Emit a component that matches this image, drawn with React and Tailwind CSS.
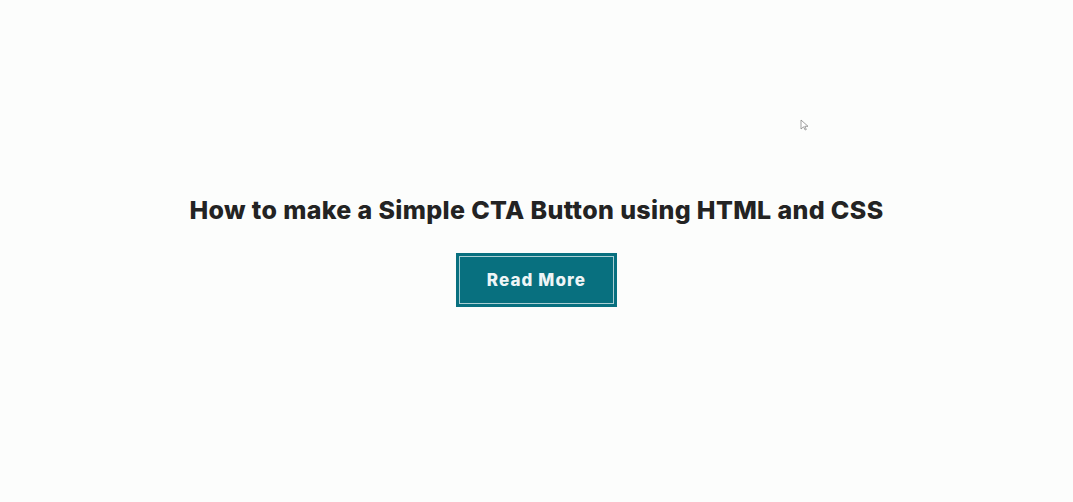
export default function App() {
  return (
    <div className="relative flex h-screen w-full flex-col items-center justify-center bg-[#fcfdfc]" style={{ fontFamily: 'Inter, "Open Sans", sans-serif' }}>
      <h1 className="text-[25px] font-extrabold leading-[30px] tracking-[0.35px] text-[#232323]">
        How to make a Simple CTA Button using HTML and CSS
      </h1>
      <button type="button" className="mt-[28px] h-[54px] w-[161px] bg-[#08707f] p-[3px]">
        <span className="flex h-full w-full items-center justify-center border border-[#a9cfd4] pt-[2px] text-[17px] font-extrabold tracking-[1.1px] text-[#eef5f6]">
          Read More
        </span>
      </button>
      <svg className="absolute left-[800px] top-[119px]" width="9" height="12" viewBox="0 0 9 12">
        <path d="M1 1 L1 10 L3.5 7.8 L5.2 11 L6.3 10.5 L4.8 7.3 L8 7.3 Z" fill="#fff" stroke="#888" strokeWidth="0.8" />
      </svg>
    </div>
  );
}
